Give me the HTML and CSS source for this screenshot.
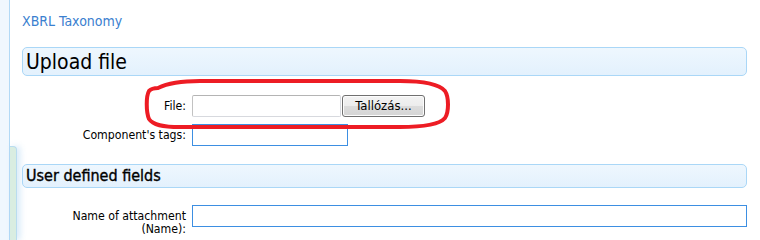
FILE: index.html
```html
<!DOCTYPE html>
<html>
<head>
<meta charset="utf-8">
<link rel="stylesheet" href="styles.css">
</head>
<body>
<div class="page">
  <div class="rail"></div>
  <div class="tabcol"><div class="tab"></div></div>
  <main class="content">
    <a class="crumb" href="#">XBRL Taxonomy</a>
    <h1 class="section big">Upload file</h1>
    <div class="form">
      <label class="lbl">File:</label>
      <div class="file"><span class="filebox"></span><button class="browse" type="button">Tallózás...</button></div>
      <label class="lbl">Component's tags:</label>
      <div><input class="inp tags" type="text"></div>
    </div>
    <h2 class="section small">User defined fields</h2>
    <div class="form form2">
      <label class="lbl top">Name of attachment<br>(Name):</label>
      <div><input class="inp name" type="text"></div>
    </div>
  </main>
  <svg class="annot" width="760" height="240" viewBox="0 0 760 240">
    <path d="M 158 88 C 170 82 185 81 200 81 L 400 81 C 424 81 439 84 445 91 C 449 97 449 112 445 118 C 439 125 420 127 400 127 L 180 127 C 162 127 153 125 149 119 C 146 112 146 96 149 91 C 151 89 154 88 158 88 Z" fill="none" stroke="#ed1c24" stroke-width="4" stroke-linejoin="round"/>
  </svg>
</div>
</body>
</html>
```
FILE: styles.css
```css
html, body {
  margin: 0;
  padding: 0;
  overflow: hidden;
  background: #ffffff;
}
body {
  font-family: "DejaVu Sans Condensed", "DejaVu Sans", sans-serif;
  font-stretch: condensed;
  color: #000;
}
.page {
  position: relative;
  display: flex;
  width: 760px;
  height: 240px;
}
.rail {
  width: 9px;
  background: #f0f7fe;
  border-right: 1px solid #b2d9f6;
}
.tabcol {
  width: 7px;
  display: flex;
  flex-direction: column;
  padding-top: 146px;
  box-sizing: border-box;
}
.tab {
  flex: 1;
  background: #d9ede1;
  border-top: 1px solid #b9dcef;
  border-right: 1px solid #b9dcef;
  border-top-right-radius: 4px;
  box-shadow: 3px 0 6px rgba(160, 205, 240, 0.45);
}
.content {
  flex: 1;
  padding: 13px 13px 0 5px;
  display: flex;
  flex-direction: column;
  align-items: stretch;
}
.crumb {
  display: block;
  align-self: flex-start;
  font-size: 14px;
  line-height: 16px;
  color: #3a80cf;
  text-decoration: none;
}
.section {
  margin: 0;
  font-weight: normal;
  border: 1px solid #aad7f7;
  border-radius: 5px;
  background: linear-gradient(to bottom, #eef7fe, #e3f1fd);
  box-sizing: border-box;
}
.big {
  margin-top: 18px;
  height: 29px;
  padding: 2px 0 0 3px;
  font-size: 21px;
  line-height: 25px;
}
.small {
  margin-top: 18px;
  height: 24px;
  padding: 0 0 0 3px;
  font-size: 16px;
  line-height: 22px;
  -webkit-text-stroke: 0.35px #000;
}
.form {
  display: grid;
  grid-template-columns: 164px 1fr;
  column-gap: 6px;
  row-gap: 7px;
  margin-top: 19px;
  align-items: center;
}
.form2 {
  margin-top: 17px;
  align-items: start;
}
.lbl {
  text-align: right;
  font-size: 12.2px;
  line-height: 13px;
}
.lbl.top {
  padding-top: 5px;
}
.file {
  display: flex;
  align-items: center;
  gap: 1px;
  height: 22px;
}
.filebox {
  display: block;
  width: 149px;
  height: 22px;
  box-sizing: border-box;
  border: 1px solid #d7d9de;
  border-top-color: #b4b4b4;
  border-left-color: #c2c2c2;
  border-radius: 2px;
  background: #fff;
}
.browse {
  width: 83px;
  height: 22px;
  box-sizing: border-box;
  border: 1px solid #707070;
  border-radius: 3px;
  background: linear-gradient(to bottom, #f3f3f3 0%, #ececec 50%, #dcdcdc 51%, #d4d4d4 100%);
  box-shadow: inset 0 0 0 1px #fcfcfc;
  font-family: "DejaVu Sans Condensed", "DejaVu Sans", sans-serif;
  font-stretch: condensed;
  font-size: 13px;
  color: #000;
  padding: 0;
  line-height: 18px;
}
.inp {
  display: block;
  height: 22px;
  box-sizing: border-box;
  border: 1px solid #3d8fe2;
  border-radius: 0;
  background: #fff;
  margin: 0;
  padding: 0 2px;
  outline: none;
}
.tags {
  width: 156px;
}
.name {
  width: 555px;
}
.annot {
  position: absolute;
  left: 0;
  top: 0;
  pointer-events: none;
}
```
